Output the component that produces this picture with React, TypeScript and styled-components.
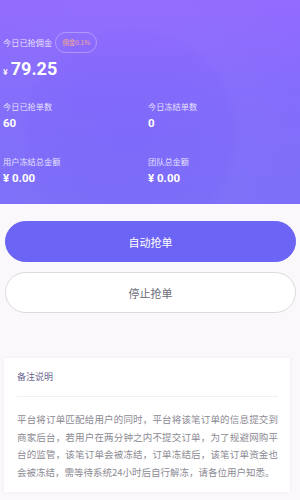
import React from 'react';
import styled, { createGlobalStyle } from 'styled-components';

const GlobalStyle = createGlobalStyle`
  html, body {
    margin: 0;
    padding: 0;
    background: #fbf8fc;
    font-family: 'Noto Sans CJK SC', 'Noto Sans', sans-serif;
  }
  * { box-sizing: border-box; }
`;

const Page = styled.div`
  width: 300px;
  height: 500px;
  overflow: hidden;
  background: #fbf8fc;
`;

const Header = styled.div`
  height: 204px;
  padding: 32px 3px 0 3px;
  color: #ffffff;
  background:
    radial-gradient(circle at 130px 135px, rgba(255, 255, 255, 0) 0, rgba(255, 255, 255, 0.015) 100px, rgba(255, 255, 255, 0.035) 112px, rgba(255, 255, 255, 0.02) 200px),
    linear-gradient(180deg, #9168fe 0%, #8169fb 45%, #7a6cf8 100%);
`;

const TopRow = styled.div`
  display: flex;
  align-items: center;
  gap: 3px;
  height: 20px;
`;

const Label = styled.div`
  font-size: 8.2px;
  line-height: 12px;
  color: rgba(255, 255, 255, 0.82);
`;

const Badge = styled.div`
  height: 21px;
  padding: 0 6px;
  border: 1px solid rgba(255, 255, 255, 0.3);
  border-radius: 11px;
  font-size: 6.5px;
  line-height: 19px;
  color: #f0a893;
`;

const Amount = styled.div`
  margin-top: 5px;
  display: flex;
  align-items: baseline;
  gap: 3px;
  font-weight: 700;
`;

const Yen = styled.span`
  font-size: 8px;
`;

const Big = styled.span`
  font-size: 18px;
  line-height: 24px;
  font-family: 'Roboto', 'Noto Sans', sans-serif;
`;

const Stats = styled.div`
  margin-top: 19px;
  display: grid;
  grid-template-columns: 145px 1fr;
  row-gap: 25px;
`;

const Stat = styled.div`
  display: flex;
  flex-direction: column;
  gap: 4px;
`;

const Value = styled.div`
  font-size: 11.5px;
  line-height: 14px;
  font-weight: 700;
  font-family: 'Roboto', 'Noto Sans', sans-serif;
`;

const Buttons = styled.div`
  padding: 17px 4px 0 5px;
  display: flex;
  flex-direction: column;
  gap: 10px;
`;

const Button = styled.div<{ $primary?: boolean }>`
  height: 41px;
  border-radius: 21px;
  display: flex;
  align-items: center;
  justify-content: center;
  font-size: 11px;
  color: ${(p) => (p.$primary ? '#ffffff' : '#6b6b78')};
  background: ${(p) => (p.$primary ? '#6c64f5' : '#ffffff')};
  border: 1px solid ${(p) => (p.$primary ? '#6c64f5' : '#dcdadf')};
`;

const Card = styled.div`
  margin: 45px 10px 0 4px;
  height: 134px;
  background: #ffffff;
  box-shadow: 0 0 3px rgba(200, 190, 210, 0.25);
  padding: 12px 12px 0 13px;
`;

const CardTitle = styled.div`
  font-size: 9px;
  line-height: 14px;
  color: #6d6890;
  padding-bottom: 12px;
  border-bottom: 1px solid #f1eff3;
`;

const Text = styled.div`
  margin-top: 14px;
  font-size: 9.5px;
  line-height: 17.6px;
  color: #8c8a93;
`;

const Line = styled.div<{ $last?: boolean }>`
  text-align: justify;
  text-align-last: ${(p) => (p.$last ? 'left' : 'justify')};
  white-space: nowrap;
`;

const lines = [
  '平台将订单匹配给用户的同时，平台将该笔订单的信息提交到',
  '商家后台，若用户在两分钟之内不提交订单，为了规避网购平',
  '台的监管，该笔订单会被冻结，订单冻结后，该笔订单资金也',
  '会被冻结，需等待系统24小时后自行解冻，请各位用户知悉。',
];

export default function App() {
  return (
    <Page>
      <GlobalStyle />
      <Header>
        <TopRow>
          <Label>今日已抢佣金</Label>
          <Badge>佣金0.1%</Badge>
        </TopRow>
        <Amount>
          <Yen>¥</Yen>
          <Big>79.25</Big>
        </Amount>
        <Stats>
          <Stat>
            <Label>今日已抢单数</Label>
            <Value>60</Value>
          </Stat>
          <Stat>
            <Label>今日冻结单数</Label>
            <Value>0</Value>
          </Stat>
          <Stat>
            <Label>用户冻结总金额</Label>
            <Value>¥ 0.00</Value>
          </Stat>
          <Stat>
            <Label>团队总金额</Label>
            <Value>¥ 0.00</Value>
          </Stat>
        </Stats>
      </Header>
      <Buttons>
        <Button $primary>自动抢单</Button>
        <Button>停止抢单</Button>
      </Buttons>
      <Card>
        <CardTitle>备注说明</CardTitle>
        <Text>
          {lines.map((l, i) => (
            <Line key={i} $last={i === lines.length - 1}>{l}</Line>
          ))}
        </Text>
      </Card>
    </Page>
  );
}
